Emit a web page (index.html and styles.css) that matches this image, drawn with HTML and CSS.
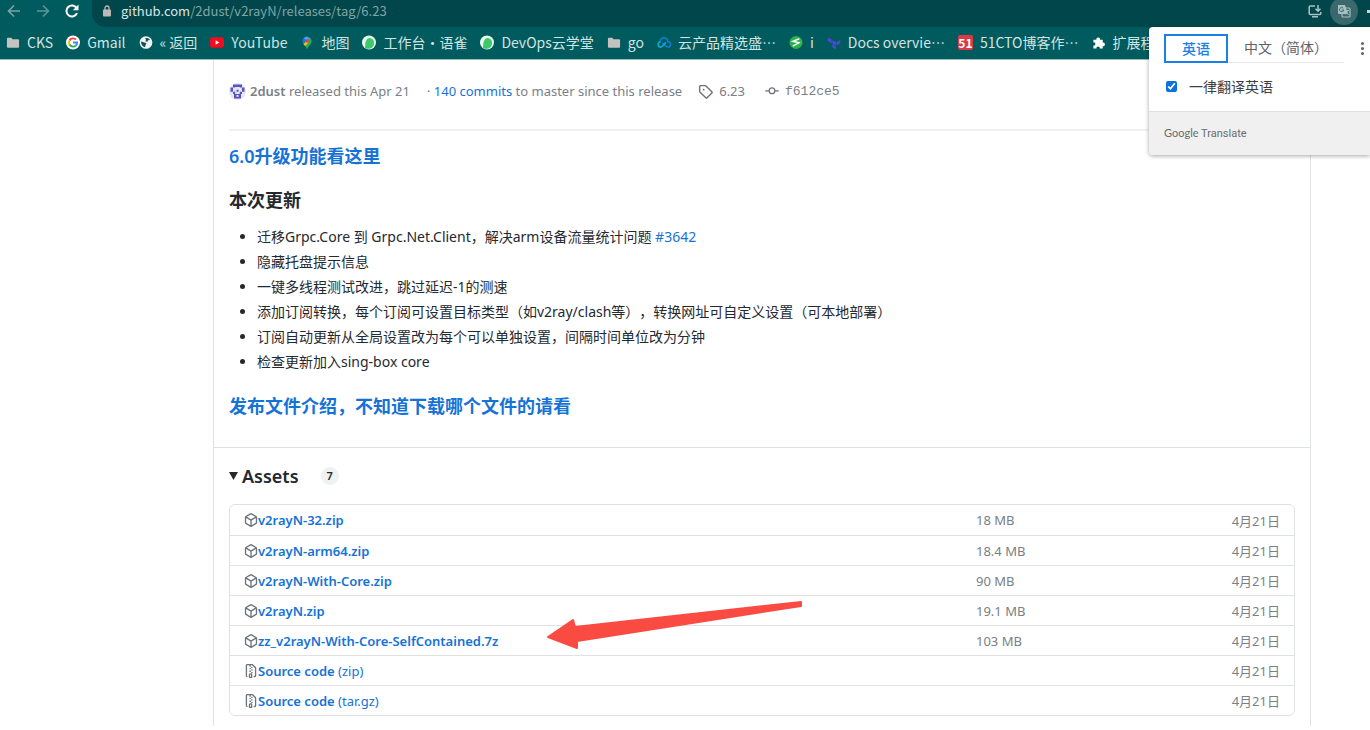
FILE: index.html
```html
<!DOCTYPE html>
<html lang="zh-CN">
<head>
  <meta charset="UTF-8">
  <meta name="viewport" content="width=device-width, initial-scale=1.0">
  <title>Release 6.23 · 2dust/v2rayN</title>
  <link rel="stylesheet" href="styles.css">
</head>
<body>
  <svg class="sprite" aria-hidden="true">
    <symbol id="folder" viewBox="0 0 15 15"><path d="M1 3.5q0-1 1-1h3.6l1.5 1.6H13q1 0 1 1v7q0 1-1 1H2q-1 0-1-1z" fill="#c3c3c1"/></symbol>
    <symbol id="yuque" viewBox="0 0 15 15"><circle cx="7.500" cy="7.500" r="7.500" fill="#eafaf0"/><path d="M3 13.300C4 10.500 3 9 4 6.500 4.800 4 6.500 2.800 8.400 2.800c3.300.3 4.900 3.300 4.500 6-.3 2.700-2 4.700-4.700 5.300-2 .3-3.800 0-5.200-.8z" fill="#3fc96b"/></symbol>
    <symbol id="package" viewBox="0 0 16 16"><path fill="#6b737b" d="m8.878.392 5.250 3.045c.54.314.872.890.872 1.514v6.098a1.750 1.750 0 0 1-.872 1.514l-5.250 3.045a1.750 1.750 0 0 1-1.756 0l-5.250-3.045A1.750 1.750 0 0 1 1 11.049V4.951c0-.624.332-1.201.872-1.514L7.122.392a1.750 1.750 0 0 1 1.756 0ZM7.875 1.690l-4.630 2.685L8 7.133l4.755-2.758-4.630-2.685a.248.248 0 0 0-.25 0ZM2.500 5.677v5.372c0 .09.047.171.125.216l4.625 2.683V8.432Zm6.250 8.271 4.625-2.683a.250.250 0 0 0 .125-.216V5.677L8.750 8.432Z"/></symbol>
    <symbol id="zip" viewBox="0 0 16 16"><path fill="#6b737b" d="M3.500 1.750v11.500c0 .09.048.173.126.217a.750.750 0 0 1-.752 1.298A1.748 1.748 0 0 1 2 13.250V1.750C2 .784 2.784 0 3.750 0h5.586c.464 0 .909.185 1.237.513l2.914 2.914c.329.328.513.773.513 1.237v8.586A1.750 1.750 0 0 1 12.250 15h-.5a.750.750 0 0 1 0-1.500h.5a.250.250 0 0 0 .25-.25V4.664a.250.250 0 0 0-.073-.177L9.513 1.573a.250.250 0 0 0-.177-.073H7.250a.750.750 0 0 1 0 1.500h-.5a.750.750 0 0 1 0-1.500h-3a.250.250 0 0 0-.25.25Zm3.750 8.750h.5c.966 0 1.750.784 1.750 1.750v3a.750.750 0 0 1-.75.75h-2.500a.750.750 0 0 1-.75-.75v-3c0-.966.784-1.750 1.750-1.750ZM6 5.250a.750.750 0 0 1 .75-.75h.5a.750.750 0 0 1 0 1.500h-.5A.750.750 0 0 1 6 5.250Zm.75 2.250h.5a.750.750 0 0 1 0 1.500h-.5a.750.750 0 0 1 0-1.500ZM8 6.750A.750.750 0 0 1 8.750 6h.5a.750.750 0 0 1 0 1.500h-.5A.750.750 0 0 1 8 6.750ZM8.750 3h.5a.750.750 0 0 1 0 1.500h-.5a.750.750 0 0 1 0-1.500ZM8 9.750A.750.750 0 0 1 8.750 9h.5a.750.750 0 0 1 0 1.500h-.5A.750.750 0 0 1 8 9.750Zm-1 2.500v2.250h1v-2.250a.250.250 0 0 0-.25-.25h-.5a.250.250 0 0 0-.25.25Z"/></symbol>
  </svg>

  <!-- Browser toolbar -->
  <div class="toolbar">
    <div class="nav-buttons">
      <button aria-label="Back"><svg width="14" height="14" viewBox="0 0 14 14" fill="none" stroke="#78a5a7" stroke-width="1.600"><path d="M13 7H1.500M7 1.500 1.500 7 7 12.500"/></svg></button>
      <button aria-label="Forward"><svg width="14" height="14" viewBox="0 0 14 14" fill="none" stroke="#5d9496" stroke-width="1.600"><path d="M1 7h11.500M7 1.500 12.500 7 7 12.500"/></svg></button>
      <button aria-label="Reload"><svg width="14" height="14" viewBox="0 0 14 14"><path d="M12 9.200A5.500 5.500 0 1 1 11.600 4" fill="none" stroke="#fff" stroke-width="2"/><path d="M13.500.5v5.700H7.800z" fill="#fff"/></svg></button>
    </div>
    <div class="address">
      <svg width="10" height="12" viewBox="0 0 10 12"><rect x="1" y="4.500" width="8" height="7" rx="1" fill="#bdb9b6"/><path d="M3 5V3a2 2 0 0 1 4 0v2" fill="none" stroke="#bdb9b6" stroke-width="1.300"/></svg>
      <span class="url"><b>github.com</b>/2dust/v2rayN/releases/tag/6.23</span>
      <button aria-label="Install"><svg width="14" height="14" viewBox="0 0 14 14" fill="none" stroke="#a9c3c5" stroke-width="1.500"><path d="M7 2H2.200q-1 0-1 1v6.500q0 1 1 1h9.600q1 0 1-1V8M4 12.700h6M10 1v6M7.500 4.800 10 7.300l2.500-2.500"/></svg></button>
      <button class="translate-btn" aria-label="Translate"><svg width="14" height="14" viewBox="0 0 14 14"><rect x="5" y="4" width="8" height="9" rx="1" fill="none" stroke="#a9bec0" stroke-width="1.200"/><path d="M1 1h7l3 9H2q-1 0-1-1z" fill="#a9bec0"/><path d="M6.300 4.300A2.100 2.100 0 1 0 6.700 6H4.800" fill="none" stroke="#3c6f73"/><path d="M8.500 6.500H12M10.500 6c0 2-1 3.500-2 4.200M9 8c.8 1.500 1.800 2 2.800 2.500" fill="none" stroke="#a9bec0"/></svg></button>
      <span class="more-edge"></span>
    </div>
  </div>

  <!-- Bookmarks bar -->
  <nav class="bookmarks">
    <a href="#"><svg><use href="#folder"/></svg>CKS</a>
    <a href="#"><svg viewBox="0 0 15 15"><circle cx="7.500" cy="7.500" r="7.500" fill="#fff"/><g fill="none" stroke-width="2"><path d="M3.700 5.300A4.400 4.400 0 0 1 10.700 4.400" stroke="#ea4335"/><path d="M3.700 9.700a4.400 4.400 0 0 1 0-4.400" stroke="#fbbc05"/><path d="M10.500 10.700a4.400 4.400 0 0 1-6.800-1" stroke="#34a853"/><path d="M7.500 7.500h4.400a4.400 4.400 0 0 1-1.400 3.200" stroke="#4285f4"/></g></svg>Gmail</a>
    <a href="#"><svg viewBox="0 0 15 15"><circle cx="7.500" cy="7.500" r="6.800" fill="#eef5f5"/><path d="M2.200 6.500c2 .2 3 1.200 4.800 1.200 1 .2 1.200 1.500.2 2l-.7 2.800C3.700 12 2 9.500 2.200 6.500zM6.500 3c2-.8 4-.1 5.200 1.700l-2 .4-.6 1.500-2.300-.5.8-1.500z" fill="#174f53"/></svg>« 返回</a>
    <a href="#"><svg viewBox="0 0 15 15"><rect y="2" width="15" height="11" rx="2.500" fill="#f50a1e"/><path d="m6 5 4 2.500L6 10z" fill="#fff"/></svg>YouTube</a>
    <a href="#"><svg viewBox="0 0 15 15"><path d="M7.500 1a5 5 0 0 0-5 5c0 1.200.6 2.300 1.200 3.100L7.500 6z" fill="#1a73e8"/><path d="M7.500 1 11.400 3 7.500 6 4 2.700z" fill="#4aa0f5"/><path d="M3.700 9.100 11.400 3c1.900 2.800 1 5-.6 7-1.300 1.400-2.300 3-3.300 4.600C7 12.500 5 11 3.700 9.100z" fill="#34a853"/><path d="M3.700 9.100 7 6l2 1.800-3.400 3.500z" fill="#fbbc04"/><circle cx="7.500" cy="5.800" r="1.900" fill="#ea4335"/></svg>地图</a>
    <a href="#"><svg><use href="#yuque"/></svg>工作台・语雀</a>
    <a href="#"><svg><use href="#yuque"/></svg>DevOps云学堂</a>
    <a href="#"><svg><use href="#folder"/></svg>go</a>
    <a href="#"><svg viewBox="0 0 15 15" fill="none" stroke-width="1.800"><path d="M3.500 6.500a4 4 0 0 1 8 0 3 3 0 0 1 0 6c-2.500 0-3.500-4-6-4" stroke="#0b7fd0"/><path d="M3.800 6.600a3 3 0 0 0 0 5.900c2.700 0 3.700-4 6-5" stroke="#12a5c9"/></svg>云产品精选盛…</a>
    <a href="#"><svg viewBox="0 0 15 15"><circle cx="7.500" cy="7.500" r="7" fill="#2bb24c"/><path d="M11 3.500 4.200 6.200l6.500 1.600L4 11.500" fill="none" stroke="#fff" stroke-width="1.500"/></svg>i</a>
    <a href="#"><svg viewBox="0 0 15 15" fill="#4b49d6"><path d="m1 2 4 2.300v4L1 6zM5.700 4.700l4 2.300v4l-4-2.300zM10.300 7l4-2.300v3.600l-4 2.300zM5.700 9.500l4 2.300V15l-4-2.300z"/></svg>Docs overvie…</a>
    <a href="#"><span class="badge-51">51</span>51CTO博客作…</a>
    <a href="#"><svg viewBox="0 0 15 15"><path d="M1.500 4.500h3.300a1.900 1.900 0 1 1 3.700 0h3v3.200a1.900 1.900 0 1 1 0 3.700V14H8.300a1.800 1.800 0 1 0-3.500 0H1.500v-3.300a1.700 1.700 0 1 0 0-3.300z" fill="#fff"/></svg>扩展程</a>
  </nav>

  <!-- Translate popup -->
  <div class="translate-popup">
    <div class="lang-row">
      <button class="lang active">英语</button>
      <button class="lang">中文（简体）</button>
      <button class="dots" aria-label="More"><i></i><i></i><i></i></button>
    </div>
    <label class="always"><input type="checkbox" checked>一律翻译英语</label>
    <div class="popup-footer"><span>Google</span> Translate</div>
  </div>

  <main class="release">
    <section class="release-body">
      <div class="meta">
        <svg class="avatar" width="17" height="17" viewBox="0 0 17 17"><circle cx="8.500" cy="8.500" r="8.500" fill="#e6e6f6"/><path d="M4 1.500h9v3h-2.200V4H6.200v.5H4zM1.500 4.500H4v4.200H1.500zM13 4.500h2.500v4.200H13zM4 8.700h2.200V11h4.600V8.700H13V11h-1v4.500H5V11H4zM7.500 6.700h2v2h-2z" fill="#5755b8"/><path d="M7.500 12h2v1.800h-2z" fill="#eeeef8"/></svg>
        <span class="author"><b>2dust</b> released this Apr 21</span>
        <span class="commits">· <a href="#">140 commits</a> to master since this release</span>
        <span class="tag"><svg width="15" height="15" viewBox="0 0 16 16" fill="#6b737b"><path d="M1 7.775V2.750C1 1.784 1.784 1 2.750 1h5.025c.464 0 .910.184 1.238.513l6.250 6.250a1.750 1.750 0 0 1 0 2.474l-5.026 5.026a1.750 1.750 0 0 1-2.474 0l-6.250-6.250A1.752 1.752 0 0 1 1 7.775Zm1.500 0c0 .066.026.130.073.177l6.250 6.250a.250.250 0 0 0 .354 0l5.025-5.025a.250.250 0 0 0 0-.354l-6.250-6.250a.250.250 0 0 0-.177-.073H2.750a.250.250 0 0 0-.250.250ZM6 5a1 1 0 1 1 0 2 1 1 0 0 1 0-2Z"/></svg>6.23</span>
        <span class="commit"><svg width="14" height="14" viewBox="0 0 16 16" fill="#6b737b"><path d="M11.930 8.500a4.002 4.002 0 0 1-7.860 0H.750a.750.750 0 0 1 0-1.500h3.320a4.002 4.002 0 0 1 7.860 0h3.320a.750.750 0 0 1 0 1.500Zm-1.430-.750a2.500 2.500 0 1 0-5 0 2.500 2.500 0 0 0 5 0Z"/></svg><code>f612ce5</code></span>
      </div>

      <h3><a href="#">6.0升级功能看这里</a></h3>
      <h3>本次更新</h3>
      <ul class="changes">
        <li>迁移Grpc.Core 到 Grpc.Net.Client，解决arm设备流量统计问题 <a href="#">#3642</a></li>
        <li>隐藏托盘提示信息</li>
        <li>一键多线程测试改进，跳过延迟-1的测速</li>
        <li>添加订阅转换，每个订阅可设置目标类型（如v2ray/clash等），转换网址可自定义设置（可本地部署）</li>
        <li>订阅自动更新从全局设置改为每个可以单独设置，间隔时间单位改为分钟</li>
        <li>检查更新加入sing-box core</li>
      </ul>
      <h3><a href="#">发布文件介绍，不知道下载哪个文件的请看</a></h3>
    </section>

    <details class="assets" open>
      <summary><svg width="9" height="8" viewBox="0 0 9 8"><path d="M0 0h9L4.500 8z" fill="#24292f"/></svg>Assets <span class="counter">7</span></summary>
      <div class="asset-box">
        <ul class="asset-list">
          <li><svg><use href="#package"/></svg><a href="#"><b>v2rayN-32.zip</b></a><span class="size">18 MB</span><span class="date">4月21日</span></li>
          <li><svg><use href="#package"/></svg><a href="#"><b>v2rayN-arm64.zip</b></a><span class="size">18.4 MB</span><span class="date">4月21日</span></li>
          <li><svg><use href="#package"/></svg><a href="#"><b>v2rayN-With-Core.zip</b></a><span class="size">90 MB</span><span class="date">4月21日</span></li>
          <li><svg><use href="#package"/></svg><a href="#"><b>v2rayN.zip</b></a><span class="size">19.1 MB</span><span class="date">4月21日</span></li>
          <li><svg><use href="#package"/></svg><a href="#"><b>zz_v2rayN-With-Core-SelfContained.7z</b></a><span class="size">103 MB</span><span class="date">4月21日</span></li>
          <li><svg><use href="#zip"/></svg><a href="#"><b>Source code</b> (zip)</a><span class="size"></span><span class="date">4月21日</span></li>
          <li><svg><use href="#zip"/></svg><a href="#"><b>Source code</b> (tar.gz)</a><span class="size"></span><span class="date">4月21日</span></li>
        </ul>
        <svg class="arrow" width="256" height="49" viewBox="0 0 256 49"><path d="M1 36 26 19l2 7L254 1v4L30 40v7z" fill="#fa4b43" stroke="#fa4b43" stroke-width="2" stroke-linejoin="round"/></svg>
      </div>
    </details>
  </main>
</body>
</html>
```
FILE: styles.css
```css
:root {
  --toolbar: #005b5e;
  --address: #00464b;
  --link: #1573d6;
  --text: #24292f;
  --muted: #7a8087;
  --border: #dfe2e5;
}
* {
  box-sizing: border-box;
}
body {
  margin: 0;
  font-family: "Noto Sans", "Noto Sans CJK SC", sans-serif;
  font-size: 14px;
  color: var(--text);
  background-color: #fff;
  text-spacing-trim: space-all;
  overflow: hidden;
}
a {
  color: var(--link);
  text-decoration: none;
}
b {
  font-weight: 600;
}
button {
  border: none;
  padding: 0;
  background: none;
  font-family: inherit;
  cursor: pointer;
}
.sprite {
  display: none;
}

/* toolbar */
.toolbar {
  display: flex;
  height: 27px;
  background-color: var(--toolbar);
}
.nav-buttons {
  display: flex;
  gap: 15px;
  width: 92px;
  padding: 0 7px;
}
.nav-buttons button {
  display: flex;
  align-items: center;
  height: 22px;
}
.address {
  flex: 1;
  display: flex;
  align-items: center;
  height: 27px;
  padding: 0 0 5px 10px;
  border-bottom-left-radius: 14px;
  background-color: var(--address);
  overflow: hidden;
}
.url {
  flex: 1;
  margin-left: 9px;
  font-family: "Noto Sans CJK SC", sans-serif;
  font-size: 13px;
  line-height: 20px;
  color: #80a5a7;
}
.url b {
  font-weight: 400;
  color: #d7e5e5;
}
.address button {
  display: flex;
  align-items: center;
  justify-content: center;
}
.address .translate-btn {
  width: 28px;
  height: 28px;
  margin-left: 8px;
  border-radius: 50%;
  background-color: #39696d;
}
.more-edge {
  width: 3px;
  height: 3px;
  margin-left: 9px;
  background-color: #c6d7d8;
}

/* bookmarks */
.bookmarks {
  display: flex;
  align-items: center;
  gap: 13px;
  height: 33px;
  padding: 0 6px 2px;
  background-color: var(--toolbar);
  border-bottom: 1px solid #8fbcbd;
  overflow: hidden;
}
.bookmarks a {
  display: flex;
  flex: none;
  align-items: center;
  gap: 7px;
  font-family: "Noto Sans CJK SC", sans-serif;
  font-size: 14px;
  line-height: 20px;
  color: #d3e3e3;
}
.bookmarks svg {
  width: 14px;
  height: 15px;
}
.badge-51 {
  width: 15px;
  height: 15px;
  border-radius: 2px;
  background-color: #d93a44;
  color: #fff;
  font-size: 12px;
  font-weight: 700;
  line-height: 15px;
  text-align: center;
}

/* translate popup */
.translate-popup {
  position: absolute;
  top: 27px;
  right: 0;
  width: 221px;
  border-radius: 4px 0 0 4px;
  background-color: #fff;
  box-shadow: 0 1px 4px rgba(0, 0, 0, 0.35);
  font-family: "Noto Sans CJK SC", sans-serif;
  overflow: hidden;
}
.lang-row {
  display: flex;
  padding: 7px 0 0 15px;
}
.lang {
  height: 29px;
  padding: 0 16px 2px;
  border-bottom: 1px solid #e8e8e8;
  font-size: 14px;
  line-height: 20px;
  color: #5f6368;
}
.lang.active {
  border: 2px solid #1a80e8;
  color: #1a80e8;
  font-weight: 500;
}
.dots {
  display: flex;
  flex-direction: column;
  justify-content: center;
  gap: 2px;
  margin-left: auto;
  padding-right: 6px;
}
.dots i {
  width: 3px;
  height: 3px;
  border-radius: 50%;
  background-color: #5f6368;
}
.always {
  display: flex;
  align-items: center;
  gap: 12px;
  height: 48px;
  padding: 0 0 2px 17px;
  color: #3c4043;
}
.always input {
  width: 11px;
  height: 11px;
  margin: 0;
  accent-color: #0b72d9;
}
.popup-footer {
  height: 44px;
  padding-left: 15px;
  border-top: 1px solid #e0e0e0;
  background-color: #f0f0f0;
  font-family: Roboto, sans-serif;
  font-size: 11px;
  line-height: 42px;
  color: #6b6b6b;
}
.popup-footer span {
  font-family: Lato, sans-serif;
}

/* release card */
.release {
  margin: 0 59px 0 213px;
  border: 1px solid var(--border);
  border-width: 0 1px;
}
.release-body {
  padding: 20px 15px 27px;
}
.meta {
  display: flex;
  align-items: center;
  box-sizing: content-box;
  height: 22px;
  padding-bottom: 27px;
  margin-bottom: 11px;
  border-bottom: 2px solid #f0f1f2;
  font-size: 13px;
  color: var(--muted);
}
.author {
  margin-left: 4px;
}
.commits {
  margin-left: 17px;
}
.tag,
.commit {
  display: flex;
  align-items: center;
  gap: 6px;
  margin-left: 16px;
}
.commit {
  margin-left: 20px;
}
.meta code {
  font-family: "Liberation Mono", monospace;
  font-size: 13px;
}
h3 {
  margin: 0 0 10px;
  font-size: 18px;
  font-weight: 600;
  line-height: 28px;
}
h3 + h3 {
  margin-top: 16px;
}
.changes {
  margin: 0 0 18px;
  padding-left: 28px;
  line-height: 25px;
}
.release-body h3:last-child {
  margin: 0;
}

/* assets */
.assets {
  padding: 14px 15px 10px;
  border-top: 1px solid var(--border);
}
.assets summary {
  display: flex;
  align-items: center;
  margin-bottom: 14px;
  font-size: 18px;
  font-weight: 600;
  line-height: 28px;
  cursor: pointer;
}
.assets summary svg {
  margin-right: 4px;
}
.counter {
  width: 18px;
  height: 18px;
  margin-left: 22px;
  border-radius: 50%;
  background-color: #eff1f2;
  font-size: 11px;
  line-height: 18px;
  text-align: center;
}
.asset-box {
  position: relative;
}
.asset-list {
  margin: 0;
  padding: 0;
  list-style: none;
  border: 1px solid var(--border);
  border-radius: 6px;
}
.asset-list li {
  display: flex;
  align-items: center;
  height: 30px;
  padding: 0 14px;
  font-size: 13px;
  color: var(--muted);
}
.asset-list li + li {
  border-top: 1px solid var(--border);
}
.asset-list svg {
  width: 14px;
  height: 14px;
}
.asset-list a {
  flex: 1;
}
.size {
  width: 152px;
}
.date {
  width: 152px;
  text-align: right;
}
.asset-box .arrow {
  position: absolute;
  top: 97px;
  left: 318px;
}
```
